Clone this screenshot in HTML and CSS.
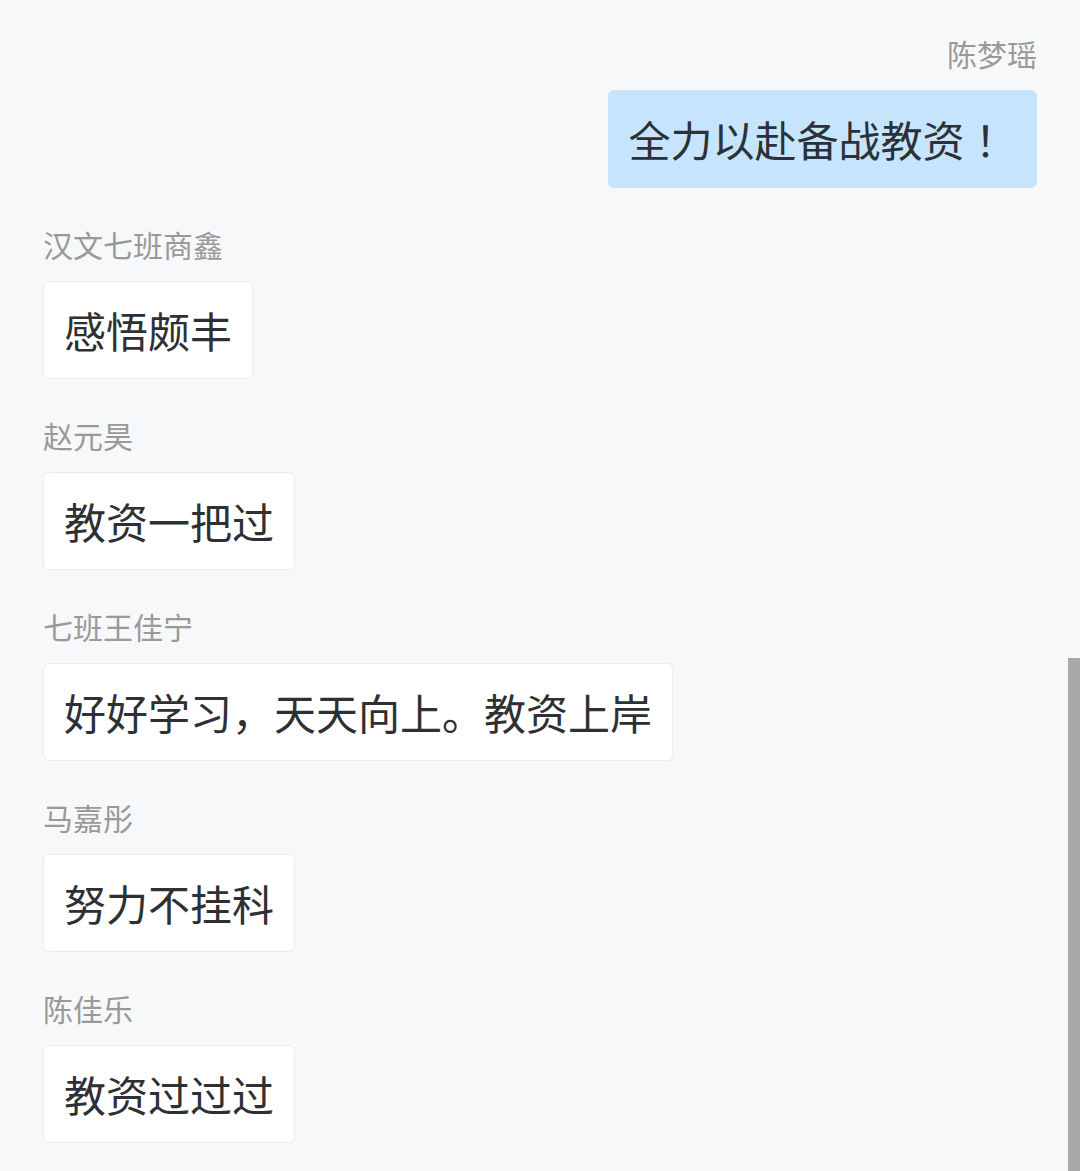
FILE: index.html
```html
<!DOCTYPE html>
<html lang="zh-CN">
<head>
    <meta charset="UTF-8">
    <meta name="viewport" content="width=device-width, initial-scale=1.0">
    <title>留言</title>
    <link rel="stylesheet" href="styles.css">
</head>
<body>
    <div class="chat">
        <div class="msg mine">
            <div class="name">陈梦瑶</div>
            <div class="bubble">全力以赴备战教资<span class="punct">！</span>&nbsp;</div>
        </div>
        <div class="msg">
            <div class="name">汉文七班商鑫</div>
            <div class="bubble">感悟颇丰</div>
        </div>
        <div class="msg">
            <div class="name">赵元昊</div>
            <div class="bubble">教资一把过</div>
        </div>
        <div class="msg">
            <div class="name">七班王佳宁</div>
            <div class="bubble">好好学习，天天向上。教资上岸</div>
        </div>
        <div class="msg">
            <div class="name">马嘉彤</div>
            <div class="bubble">努力不挂科</div>
        </div>
        <div class="msg">
            <div class="name">陈佳乐</div>
            <div class="bubble">教资过过过</div>
        </div>
    </div>

    <div class="scroll-thumb"></div>
</body>
</html>
```

FILE: styles.css
```css
html, body {
    margin: 0;
    padding: 0;
    background-color: #f7f8fa;
    height: 100%;
    overflow: hidden;
}
body {
    font-family: "Noto Sans CJK SC", "Noto Sans", sans-serif;
    position: relative;
    text-spacing-trim: space-all;
}
.chat {
    padding: 33px 43px 0 43px;
    display: flex;
    flex-direction: column;
    gap: 36px;
}
.msg {
    display: flex;
    flex-direction: column;
    align-items: flex-start;
    gap: 17px;
}
.msg.mine {
    align-items: flex-end;
}
.name {
    font-size: 30px;
    line-height: 40px;
    color: #999999;
}
.bubble {
    box-sizing: border-box;
    height: 98px;
    display: flex;
    align-items: center;
    padding: 0 20px;
    font-size: 42px;
    line-height: 58px;
    color: #2e3033;
    background: #ffffff;
    border: 1px solid #eaecef;
    border-radius: 6px;
    white-space: pre;
}
.punct {
    font-family: "Noto Sans CJK JP", "Noto Sans CJK SC", sans-serif;
}
.mine .bubble {
    background: #c6e4fb;
    border-color: #c6e4fb;
    color: #2a3138;
}
.scroll-thumb {
    position: absolute;
    right: 0;
    top: 658px;
    width: 12px;
    height: 513px;
    background: #a9a9a9;
}
```
